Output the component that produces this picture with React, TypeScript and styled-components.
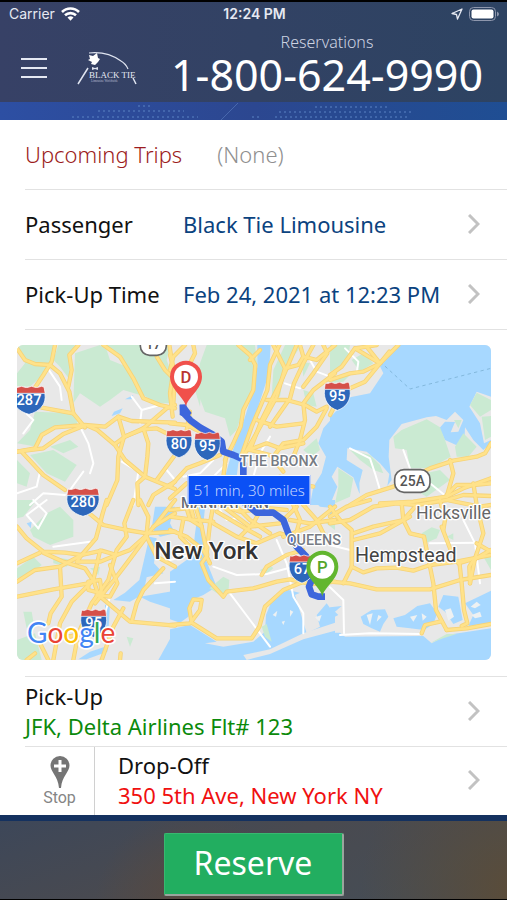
import React from "react";
import styled, { createGlobalStyle } from "styled-components";

const GlobalStyle = createGlobalStyle`
  *, *::before, *::after { box-sizing: border-box; }
  body {
    margin: 0;
    background: #fff;
    font-family: "Noto Sans", "Open Sans", sans-serif;
    color: #111;
  }
  button { font: inherit; color: inherit; border: 0; padding: 0; background: none; cursor: pointer; }
`;

const Page = styled.div`
  min-height: 100vh;
  display: flex;
  flex-direction: column;
`;

const Header = styled.header`
  border-top: 2px solid #000;
  background: linear-gradient(90deg, #374166, #2d4362);
  color: #fff;
`;

const StatusBar = styled.div`
  display: grid;
  grid-template-columns: 1fr auto 1fr;
  align-items: center;
  height: 24px;
  padding: 0 7px 0 9px;
  font: 500 14px/24px Inter, sans-serif;
  color: #e6e9f2;
`;

const StatusGroup = styled.div<{ $end?: boolean }>`
  display: flex;
  align-items: center;
  gap: 6px;
  justify-content: ${(p) => (p.$end ? "flex-end" : "flex-start")};
  font-weight: 400;
`;

const Clock = styled.time`
  font-size: 14px;
  font-weight: 600;
`;

const Brand = styled.div`
  display: flex;
  align-items: center;
  height: 76px;
  padding: 0 20px;
`;

const MenuButton = styled.button`
  width: 28px;
  height: 28px;
  margin-top: 8px;
  svg { display: block; }
`;

const LogoLink = styled.a`
  margin: 8px 0 0 29px;
  svg { display: block; }
`;

const PhoneLink = styled.a`
  flex: 1;
  display: flex;
  flex-direction: column;
  align-items: center;
  margin-left: auto;
  max-width: 320px;
  padding-top: 2px;
  color: #fff;
  text-decoration: none;
  white-space: nowrap;
`;

const PhoneCaption = styled.span`
  font-size: 16px;
  line-height: 20px;
  font-weight: 300;
  color: #cdd3e2;
`;

const PhoneNumber = styled.span`
  font-size: 43px;
  line-height: 46px;
`;

const Strip = styled.div<{ $dark?: boolean }>`
  height: ${(p) => (p.$dark ? 6 : 18)}px;
  background: ${(p) =>
    p.$dark ? "#14315f" : "linear-gradient(90deg, #2d4fa3, #2c4790 50%, #1f4e93)"};
  svg { display: block; margin: 0 auto; }
`;

const Main = styled.main`
  flex: 1;
`;

const Row = styled.button`
  display: flex;
  align-items: center;
  width: calc(100% - 25px);
  min-height: 70px;
  margin-left: 25px;
  padding: 0 27px 2px 0;
  border-bottom: 1px solid #e2e2e2;
  font-size: 22px;
  line-height: 30px;
  text-align: left;
`;

const SummaryRow = styled(Row).attrs({ as: "section" })`
  gap: 35px;
  font-weight: 300;
`;

const Summary = styled.h1`
  margin: 0;
  font-size: 22px;
  font-weight: 300;
  color: #9c1c20;
`;

const Muted = styled.span`
  color: #8f8f8f;
`;

const RowLabel = styled.span`
  width: 158px;
`;

const Value = styled.span<{ $color: string }>`
  color: ${(p) => p.$color};
`;

const Grow = styled.span`
  flex: 1;
`;

const Stack = styled.span`
  flex: 1;
  display: flex;
  flex-direction: column;
`;

const Stops = styled.section`
  margin-left: 25px;
  border-top: 1px solid #e2e2e2;
`;

const StopRow = styled(Row)`
  width: 100%;
  min-height: 69px;
  margin-left: 0;
  border-bottom: 0;
`;

const DropRow = styled.div`
  display: flex;
  border-top: 1px solid #e2e2e2;
  ${StopRow} { flex: 1; min-height: 68px; padding-left: 23px; }
`;

const AddStop = styled.button`
  display: flex;
  flex-direction: column;
  align-items: center;
  justify-content: center;
  width: 70px;
  border-right: 1px solid #d0d0d0;
  font: 400 16px/18px Roboto, sans-serif;
  color: #858585;
`;

const MapFrame = styled.section`
  position: relative;
  margin: 15px 16px 16px 17px;
  border-radius: 6px;
  overflow: hidden;
  svg { display: block; width: 100%; height: auto; }
`;

const TripBadge = styled.div`
  position: absolute;
  left: 49%;
  top: 46%;
  transform: translate(-50%, -50%);
  padding: 0 5px;
  border: 1px solid #fff;
  background: #0b50f5;
  color: #c5d6ff;
  font-size: 15px;
  line-height: 28px;
  font-weight: 300;
  white-space: nowrap;
`;

const Footer = styled.footer`
  border-bottom: 1px solid #000;
`;

const FooterBar = styled.div`
  display: flex;
  justify-content: center;
  padding: 12px 0 3px;
  background:
    radial-gradient(circle at 38% 110%, #58493f, transparent 30%),
    radial-gradient(circle at 102% 90%, #5b4c38, transparent 30%),
    linear-gradient(160deg, #3d4759, #494a50 45%, #454e57);
`;

const ReserveButton = styled.button`
  width: 180px;
  height: 63px;
  padding-bottom: 2px;
  border: 1px solid #38b870;
  border-right: 2px solid #9aa59d;
  border-bottom: 2px solid #9aa59d;
  border-radius: 2px;
  background: #22ae60;
  color: #fff;
  font-size: 32px;
  line-height: 40px;
`;

const Chevron = () => (
  <svg width="12" height="20" viewBox="0 0 12 20" aria-hidden="true">
    <path d="M1 1l9 9-9 9" fill="none" stroke="#c2c2c2" strokeWidth="3" />
  </svg>
);

const Wifi = () => (
  <svg width="19" height="14" viewBox="0 0 19 14" fill="none" stroke="#fff" strokeWidth="2.6" aria-label="Wi-Fi">
    <path d="M1 5a12 12 0 0117 0M4 8.300a8 8 0 0111 0" />
    <path d="M6.500 10.500a4.500 4.500 0 016 0l-3 3.300z" fill="#fff" stroke="none" />
  </svg>
);

const Location = () => (
  <svg width="12" height="12" viewBox="0 0 12 12" aria-label="Location">
    <path d="M11 1L1 5.500l4.500 1L6.500 11z" fill="none" stroke="#e6e9f2" strokeWidth="1.300" strokeLinejoin="round" />
  </svg>
);

const Battery = () => (
  <svg width="31" height="14" viewBox="0 0 31 14" aria-label="Battery full">
    <rect x="0.500" y="0.500" width="26" height="13" rx="4" fill="none" stroke="#8e97ad" />
    <rect x="2.500" y="2.500" width="22" height="9" rx="2" fill="#fff" />
    <path d="M28 4.500q2 1 2 2.500t-2 2.500z" fill="#8e97ad" />
  </svg>
);

const Logo = () => (
  <svg width="62" height="36" viewBox="0 0 62 36" aria-label="Black Tie">
    <path d="M12 3Q30 1 44 11Q49 14 51 19" fill="none" stroke="#dfe4f0" strokeWidth="1.200" />
    <path d="M56 28l3 6M11 18L1 34" stroke="#dfe4f0" strokeWidth="1.500" />
    <path d="M12 5l4 1 4-3 1 5 2 1-2 3-3 3-4-1 1-2-4-2 2-1z" fill="#fff" />
    <path d="M15 17l3 1 3-1v3l-3-1-3 1z" fill="#dfe4f0" />
    <text x="12" y="28" fontFamily="Liberation Serif, serif" fontSize="9" fill="#e6eaf4">BLACK TIE</text>
    <text x="14" y="32" fontFamily="Liberation Serif, serif" fontSize="3" fill="#b5bdd2">Limousine Worldwide</text>
  </svg>
);

const WorldDots = () => (
  <svg width="507" height="18" viewBox="0 0 507 18" aria-hidden="true">
    <g stroke="#5a83c4" strokeWidth="2" strokeDasharray="2 3" opacity="0.5">
      <path d="M138 4h14M315 5h72M98 9h86M279 10h133M72 15h126M252 15h10M275 15h132" />
    </g>
    <path d="M221 18l17-17" stroke="#6488c8" opacity="0.500" />
  </svg>
);

const StopPin = () => (
  <svg width="20" height="33" viewBox="0 0 20 33" aria-hidden="true">
    <path d="M10 0a9.500 9.500 0 00-9.500 9.500C.5 16 8 20 9 32h2c1-12 8.500-16 8.500-22.500A9.500 9.500 0 0010 0z" fill="#757575" />
    <path d="M10 4v12M4 10h12" stroke="#fff" strokeWidth="3" />
  </svg>
);

type Tile = {
  x: number;
  y: number;
  water: string[];
  land?: string[];
  parks: string[];
  marsh?: string[];
  streets: string[];
  roads: string[];
};

// The drawing area is 1422 by 945 units, split in a grid of three by two tiles.
const tiles: Tile[] = [
  {
    x: -21, y: -15,
    water: ["205,90 225,85 220,110 207,115", "305,228 312,215 338,205 330,220", "345,178 370,165 365,178"],
    parks: [
      "21,15 130,15 122,66 98,105 60,140 21,138 21,100 45,70",
      "145,15 195,15 178,60 180,120 150,80 130,60",
      "195,40 270,15 290,30 300,60 350,80 370,115 390,165 340,150 300,180 270,200 210,160 190,190",
      "280,15 480,15 470,60 495,130 495,190 440,190 400,165 365,100 320,50",
      "75,215 190,220 205,252 130,258 95,280 80,320 21,310 60,270",
      "60,345 130,330 200,375 165,425 110,400",
      "120,320 180,300 205,320 160,340",
      "21,360 60,400 50,440 21,430",
    ],
    streets: [
      "110,80 150,140 155,180", "205,250 235,310 250,370 240,400", "365,170 395,210 450,195", "395,210 390,250",
      "21,460 80,440 90,395", "220,395 180,450", "335,365 385,395 370,495", "60,495 100,460 165,465", "470,390 495,420",
      "21,195 70,240 40,280",
    ],
    roads: [
      "21,25 45,60 75,72 120,75 150,100 178,155 190,220 225,262",
      "135,15 125,65 100,105 70,150",
      "205,15 178,45 185,90 175,140",
      "280,15 330,50 370,115 400,175 450,195 495,205",
      "95,203 190,220",
      "21,335 75,325 95,285 135,262 225,255 285,260 325,230 365,243 495,248",
      "21,335 100,325 160,282 220,258",
      "35,335 100,405 165,450",
      "235,258 262,270 315,315 345,360 405,410 495,447",
      "325,230 342,290 325,350 322,420 290,495",
      "315,312 345,290 400,265 470,205 495,195",
      "342,290 400,268 440,265 480,285",
      "400,265 415,310 412,350 405,410 382,430 385,495",
      "495,345 440,420",
      "415,495 430,465 470,440 495,425",
      "478,15 490,90 480,160 488,230",
      "440,50 465,90 485,110",
    ],
  },
  {
    x: 459, y: -15,
    water: [
      "262,15 302,15 297,100 268,190 240,280 205,370 200,410 165,410 185,340 222,240 250,150 262,80",
      "495,225 460,265 445,310 468,350 455,400 430,440 420,495 495,495",
      "100,110 140,85 130,102 105,120",
    ],
    parks: [
      "110,15 255,15 262,75 250,150 222,200 200,270 180,290 165,235 105,215 80,150 90,70",
      "310,90 345,15 395,15 370,50 340,110 330,170 305,170",
      "400,150 430,160 440,200 410,195", "400,330 440,295 450,330 425,350",
      "395,65 420,70 400,110", "210,375 235,370 220,400", "60,100 95,130 90,200",
    ],
    streets: ["300,290 270,340 250,410", "130,410 170,370", "420,60 440,95 480,110", "130,360 90,400 40,410", "345,130 390,145"],
    roads: [
      "0,45 15,100 10,190", "45,15 10,50 0,90", "70,15 75,40 60,70",
      "205,15 240,45 256,75 250,150 220,210 212,260 190,310 165,360",
      "240,60 270,30", "328,15 300,75 292,150 245,260 215,345",
      "310,15 345,85 320,170 265,270 225,340",
      "380,15 350,85 335,120 300,190 275,240 240,330",
      "430,15 400,70 372,130 360,175 300,260",
      "290,180 350,180 405,195 440,215 470,200",
      "495,100 430,150 400,190 405,240 390,300 370,350",
      "460,15 472,40 430,100 400,140",
      "470,205 440,260 400,300 340,310 310,350",
      "235,330 290,310 330,325 400,310", "0,250 50,255 100,280",
      "0,440 50,385 90,370 150,345", "168,350 160,410", "0,475 50,430",
      "390,15 400,50 440,60 495,15", "345,85 385,75 400,50", "260,240 320,260 400,250",
      "60,215 45,300", "330,410 380,430 430,440", "240,330 300,345 340,395",
    ],
  },
  {
    x: 939, y: -15,
    water: ["205,15 483,15 483,495 0,495 0,232 60,172 120,160 160,100 148,75"],
    land: [
      "178,300 215,252 290,232 318,228 350,240 375,215 400,240 385,275 362,277 375,246 345,245 328,265 345,300 385,318 402,320 405,262 430,300 460,330 483,310 483,495 60,495 170,440 185,420 176,350",
      "440,155 483,170 483,300 462,310 450,250 418,200",
      "52,325 110,335 150,370 178,402 170,450 90,485 88,430 98,390 50,360",
      "22,380 70,412 88,460 150,452 60,495 0,495 22,440 5,410",
    ],
    parks: [
      "0,15 60,15 55,50 30,80 0,95", "65,60 100,40 130,70 90,95", "0,110 60,105 40,125 0,130",
      "190,290 215,270 290,238 330,262 345,300 362,350 300,385 240,385 230,330 195,325",
      "420,195 440,158 483,180 483,210 450,230", "455,230 483,228 483,290 465,300",
      "60,330 120,345 150,375 160,400 130,390 90,360", "25,385 70,415 60,470 15,490 25,440",
      "372,240 395,240 385,265", "375,320 400,280 440,320 415,350 380,350", "240,410 330,390 360,420 290,470 240,440",
    ],
    streets: ["60,325 120,355 135,400 150,450", "220,330 240,385", "300,430 350,470", "45,25 85,65 80,100"],
    roads: [
      "0,105 35,80 75,25 110,20 150,70 205,15", "0,120 60,100 100,95 150,70 178,35",
      "150,70 105,125 60,145 40,165", "110,20 140,15", "75,25 150,70",
      "60,495 110,465 190,440 300,385 370,362 440,350 465,340 483,310",
      "360,360 370,400 350,470", "150,490 250,485 350,470 400,445 483,415",
      "350,465 380,435 430,435 483,430", "430,430 440,495", "350,480 400,465 483,468", "0,225 15,195",
    ],
  },
  {
    x: -21, y: 465,
    water: [
      "418,110 440,115 432,190 460,220 410,232 400,282 360,305 310,300 345,278 388,240 402,180",
      "435,20 495,20 480,70 495,100 450,110 425,85",
      "390,290 495,272 495,330 420,305", "495,390 445,480 495,480", "205,478 240,455 285,440 285,315 300,310 292,455 230,478",
      "50,70 65,65 62,85",
    ],
    parks: [
      "21,0 80,0 40,50 21,55", "60,90 110,40 150,20 190,60 190,110 120,135 70,110", "21,205 70,170 95,195 60,225 21,235",
      "40,335 65,335 72,375 50,385", "21,420 75,400 95,480 21,480", "130,170 185,180 170,200 130,190", "240,205 270,200 265,225",
      "350,410 370,415 360,440",
    ],
    streets: ["110,0 50,45 85,85", "85,85 110,40 70,0", "130,140 240,125", "435,250 495,245", "300,290 285,340"],
    roads: [
      "21,80 50,115 100,155 165,158 215,165 275,152 320,165 360,150 410,105 440,70 495,0",
      "21,190 90,158", "21,245 75,210 150,200 215,165 258,115 278,40 290,0",
      "100,158 160,185 225,205 252,245 265,285 360,365 495,377",
      "235,38 280,75 350,90 410,100 495,95", "370,0 343,70 350,110 320,150 295,240 245,310 205,400 190,480",
      "410,110 350,190 312,240 255,310", "215,165 200,185 270,185 320,165",
      "150,200 155,290 122,340 115,370", "21,290 130,268 235,250", "250,240 185,305 150,370 130,480",
      "410,110 440,170 495,200", "460,205 400,270 380,310 365,365", "90,430 115,480",
      "340,325 310,380 275,480", "50,480 75,460", "270,152 250,240", "300,195 322,250 300,290 260,285",
      "390,0 415,50 410,100", "235,245 235,270 275,280 270,240 235,245", "495,40 430,80", "330,480 332,460",
      "150,400 180,410 210,400",
    ],
  },
  {
    x: 459, y: 465,
    water: [
      "88,15 106,15 98,90 100,160 140,260 100,285 65,300 55,350 30,368 0,358 0,215 50,180 68,170 75,100",
      "0,388 60,375 140,425 105,430 160,440 250,425 285,395 288,345 310,290 355,270 415,285 440,300 495,315 495,480 0,480",
      "235,0 300,0 280,12 240,12", "430,0 495,0 495,25 450,20",
    ],
    land: [
      "220,465 300,448 400,400 495,368 495,392 400,418 300,462 230,480", "375,285 410,270 495,262 495,345 470,310 440,345 450,380 410,400 395,350",
    ],
    parks: ["118,265 160,230 178,240 175,280 160,292", "275,380 290,372 305,425 285,410", "455,60 495,65 495,90", "270,210 300,195 310,205 285,225"],
    marsh: ["308,345 322,332 318,350", "335,365 345,362 340,375", "360,330 370,335 360,350", "435,352 455,345 448,365"],
    streets: [
      "130,200 200,225 290,222 370,200", "180,280 240,360 300,440", "320,120 350,190 370,290 400,340 400,400", "0,180 60,165",
      "150,30 170,60 200,55",
    ],
    roads: [
      "0,90 50,110 100,150 120,190", "75,15 95,80 112,165 95,190 115,240 160,290 170,275 250,265 320,245 360,238 420,252",
      "0,50 60,58 130,65", "130,15 120,70 110,160", "0,375 60,370 90,330 95,300 70,298 58,325 65,368 140,415 245,415 268,380 285,320 340,270 400,245",
      "130,70 200,110 260,130 330,100 360,110", "160,20 240,80 330,70 380,20", "200,20 240,60 300,100",
      "360,60 420,70 495,60", "275,225 290,200 350,165 400,150", "400,15 440,60 470,120", "495,20 420,80 340,110",
      "280,15 250,70 210,110", "0,30 50,25 60,58 95,80", "60,15 70,50", "370,15 390,60 370,130", "140,35 200,70 270,110",
      "430,252 495,245", "150,15 210,35 300,25 350,30", "40,58 30,110 90,170",
    ],
  },
  {
    x: 939, y: 465,
    water: [
      "0,398 30,398 45,410 280,408 305,430 350,405 483,385 483,480 0,480",
      "0,322 35,318 15,335 25,345 0,358", "0,25 20,45 0,45",
      "92,350 125,330 165,328 175,350 160,372 150,395 125,385 100,372",
      "190,355 225,345 262,318 300,310 322,340 310,372 282,390 240,385 200,380",
      "340,285 385,290 398,360 370,372 345,335 325,320", "405,310 483,272 483,368 415,378 430,345",
    ],
    parks: ["275,100 305,82 330,90 320,115 290,128", "300,430 350,402 380,402 340,415", "350,110 370,100 370,120", "460,170 483,160 483,210"],
    marsh: [
      "110,345 128,340 120,375", "145,345 155,350 140,365", "240,350 262,345 250,365", "345,330 362,325 372,350 355,362",
      "422,320 440,305 452,315 435,325", "425,345 450,335 455,350 435,355", "275,340 290,350 278,362",
    ],
    streets: ["400,60 435,130 450,250", "300,130 440,128", "0,262 40,300 42,400", "30,405 120,400 270,402", "0,135 60,150"],
    roads: [
      "0,20 30,60 65,90 65,200 40,250", "0,245 60,250 140,268 300,268 390,240 483,225",
      "65,200 100,217 140,205 200,203 250,212 300,195 380,185 483,165", "0,70 60,60 130,20 200,10 260,15",
      "70,100 130,80 220,60 260,15", "215,10 220,60 240,100 282,110 290,150 300,200 310,250 318,330 350,390",
      "70,120 150,100 240,50", "388,185 395,250 402,330 412,370 395,378", "275,400 285,375 330,365",
      "350,390 410,385 483,372", "335,80 362,150", "330,0 345,60 340,90", "440,15 460,100 435,175 420,250",
      "483,150 430,180 418,200 420,250", "0,50 50,20 120,0", "260,15 350,0 450,20 483,15", "385,190 420,180", "440,130 483,155",
    ],
  },
];

const Shield = ({ x, y, label, wide }: { x: number; y: number; label: string; wide?: boolean }) => (
  <g transform={`translate(${x} ${y})`}>
    <g transform={wide ? "scale(1.25 1)" : undefined}>
      <path d="M-36-40q6 3 12 0 6-4 12 0 6 3 12 0 6-4 12 0 6 3 12 0 6-4 12 0l3 20h-78z" fill="#d5504a" stroke="#fff" strokeWidth="2" />
      <path d="M-38-21h76C43 12 25 34 0 42-25 34-43 12-38-21z" fill="#2d67bb" stroke="#fff" strokeWidth="2" />
    </g>
    <text y="15" textAnchor="middle" fontFamily="Roboto, sans-serif" fontSize="44" fontWeight="500" fill="#fff">{label}</text>
  </g>
);

const RouteMarker = ({ x, y, label }: { x: number; y: number; label: string }) => {
  const half = label.length > 2 ? 53 : 39;
  return (
    <g transform={`translate(${x} ${y})`}>
      <rect x={-half} y="-34" width={half * 2} height="68" rx="28" fill="#fff" stroke="#666" strokeWidth="5" />
      <text y="14" textAnchor="middle" fontFamily="Roboto, sans-serif" fontSize="42" fontWeight="500" fill="#555">{label}</text>
    </g>
  );
};

const Pin = ({ x, y, label, color, ink }: { x: number; y: number; label: string; color: string; ink: string }) => (
  <g transform={`translate(${x} ${y})`}>
    <path d="M0 90C-4 62-48 38-48 0a48 48 0 0196 0C48 38 4 62 0 90z" fill={color} />
    <circle r="36" fill="#fff" />
    <text y="18" textAnchor="middle" fontFamily="Roboto, sans-serif" fontSize="50" fontWeight="500" fill={ink}>{label}</text>
  </g>
);

const places = [
  { name: "New York", x: 412, y: 642, size: 73, color: "#333", weight: 500 },
  { name: "Hempstead", x: 1014, y: 651, size: 59, color: "#444", weight: 400 },
  { name: "Hicksville", x: 1197, y: 522, size: 53, color: "#666", weight: 400 },
  { name: "THE BRONX", x: 669, y: 363, size: 43, color: "#777c84", weight: 500 },
  { name: "QUEENS", x: 809, y: 601, size: 43, color: "#777c84", weight: 500 },
  { name: "MANHATTAN", x: 492, y: 489, size: 43, color: "#666b73", weight: 500 },
];

const googleLetters: [string, string][] = [
  ["G", "#4285f4"], ["o", "#ea4335"], ["o", "#fbbc05"], ["g", "#4285f4"], ["l", "#34a853"], ["e", "#ea4335"],
];

const eachTile = (draw: (t: Tile) => React.ReactNode) =>
  tiles.map((t) => (
    <g key={`${t.x} ${t.y}`} transform={`translate(${t.x} ${t.y})`}>{draw(t)}</g>
  ));

const areas = (list: string[] = []) => list.map((points) => <polygon key={points} points={points} />);
const lines = (list: string[]) => list.map((points) => <polyline key={points} points={points} />);

const RouteMap = () => (
  <svg viewBox="0 0 1422 945" role="img" aria-label="Route map">
    <rect width="1422" height="945" fill="#e8e8e8" />
    {eachTile((t) => (
      <>
        <g fill="#a7d8ff">{areas(t.water)}</g>
        <g fill="#e8e8e8">{areas(t.land)}</g>
        <g fill="#caead2">{areas(t.parks)}</g>
        <g fill="#eef1f2">{areas(t.marsh)}</g>
      </>
    ))}
    <path d="M1089 50L1179 132 1422 70" fill="none" stroke="#83b8dc" strokeWidth="3" strokeDasharray="10 10" />
    <g fill="none" strokeLinecap="round" strokeLinejoin="round">
      <g stroke="#fff" strokeWidth="6">{eachTile((t) => lines(t.streets))}</g>
      <g stroke="#f6d378" strokeWidth="13">{eachTile((t) => lines(t.roads))}</g>
      <g stroke="#ffe28a" strokeWidth="8">{eachTile((t) => lines(t.roads))}</g>
      <g stroke="#3d66dc" strokeWidth="20" strokeLinecap="butt">
        <path d="M498 178L499 203 520 226 549 247 589 270 614 290 619 320 649 330 674 341M679 352V390" />
        <path d="M679 470L719 503 769 503 799 525 814 565 839 605 868 635 886 700 876 725 884 748 904 755H924" />
        <path d="M488 180h18l18 24-12 16-24-10z" fill="#3d66dc" stroke="none" />
      </g>
    </g>
    <g fontFamily="Roboto, sans-serif" stroke="#fff" strokeWidth="8" strokeLinejoin="round" paintOrder="stroke">
      {places.map((p) => (
        <text key={p.name} x={p.x} y={p.y} fontSize={p.size} fontWeight={p.weight} fill={p.color}>{p.name}</text>
      ))}
    </g>
    <Shield x={36} y={166} label="287" wide />
    <Shield x={961} y={154} label="95" />
    <Shield x={486} y={296} label="80" />
    <Shield x={571} y={304} label="95" />
    <Shield x={198} y={472} label="280" wide />
    <Shield x={230} y={835} label="95" />
    <Shield x={855} y={672} label="67" />
    <RouteMarker x={409} y={-3} label="17" />
    <RouteMarker x={1186} y={408} label="25A" />
    <Pin x={507} y={95} label="D" color="#f0504b" ink="#b93532" />
    <Pin x={916} y={665} label="P" color="#62b62f" ink="#55a52a" />
    <text x="30" y="893" fontFamily="Lato, sans-serif" fontSize="84" fontWeight="400" stroke="#fff" strokeWidth="10" strokeLinejoin="round" paintOrder="stroke">
      {googleLetters.map(([letter, color], i) => (
        <tspan key={i} fill={color}>{letter}</tspan>
      ))}
    </text>
  </svg>
);

export default function App() {
  return (
    <Page>
      <GlobalStyle />
      <Header>
        <StatusBar>
          <StatusGroup>Carrier <Wifi /></StatusGroup>
          <Clock>12:24 PM</Clock>
          <StatusGroup $end><Location /><Battery /></StatusGroup>
        </StatusBar>
        <Brand>
          <MenuButton aria-label="Menu">
            <svg width="28" height="28" viewBox="0 0 28 28" stroke="#e4e8f2" strokeWidth="2">
              <path d="M1 5h26M1 14h26M1 23h26" />
            </svg>
          </MenuButton>
          <LogoLink href="#home"><Logo /></LogoLink>
          <PhoneLink href="tel:1-800-624-9990">
            <PhoneCaption>Reservations</PhoneCaption>
            <PhoneNumber>1-800-624-9990</PhoneNumber>
          </PhoneLink>
        </Brand>
        <Strip><WorldDots /></Strip>
      </Header>
      <Main>
        <SummaryRow>
          <Summary>Upcoming Trips</Summary>
          <Muted>(None)</Muted>
        </SummaryRow>
        <Row>
          <RowLabel>Passenger</RowLabel>
          <Value $color="#0b437f">Black Tie Limousine</Value>
          <Grow />
          <Chevron />
        </Row>
        <Row>
          <RowLabel>Pick-Up Time</RowLabel>
          <Value $color="#0b437f">Feb 24, 2021 at 12:23 PM</Value>
          <Grow />
          <Chevron />
        </Row>
        <MapFrame>
          <RouteMap />
          <TripBadge>51 min, 30 miles</TripBadge>
        </MapFrame>
        <Stops>
          <StopRow>
            <Stack>
              <span>Pick-Up</span>
              <Value $color="#0b8a0b">JFK, Delta Airlines Flt# 123</Value>
            </Stack>
            <Chevron />
          </StopRow>
          <DropRow>
            <AddStop><StopPin />Stop</AddStop>
            <StopRow>
              <Stack>
                <span>Drop-Off</span>
                <Value $color="#f01010">350 5th Ave, New York NY</Value>
              </Stack>
              <Chevron />
            </StopRow>
          </DropRow>
        </Stops>
      </Main>
      <Footer>
        <Strip $dark />
        <FooterBar>
          <ReserveButton>Reserve</ReserveButton>
        </FooterBar>
      </Footer>
    </Page>
  );
}
